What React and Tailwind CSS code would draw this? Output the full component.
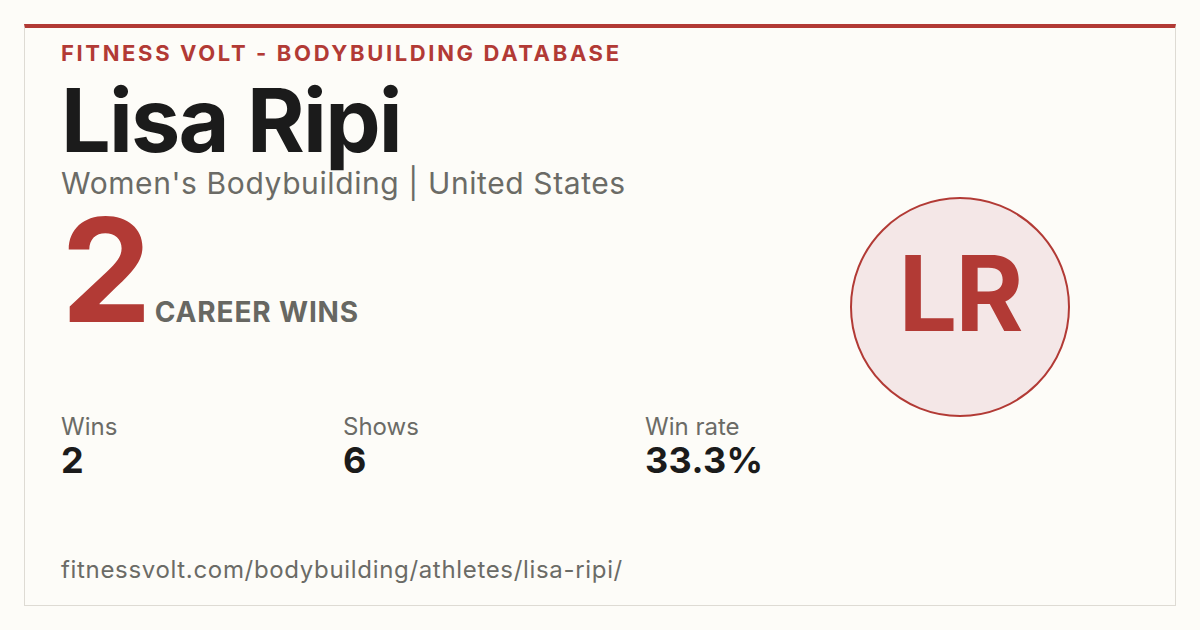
export default function App() {
  const font = { fontFamily: 'Inter, "Noto Sans", sans-serif' };
  return (
    <div className="w-[1200px] h-[630px] bg-[#fdfcf8] p-6" style={font}>
      <div className="h-full border border-[#dedbd4] border-t-4 border-t-[#b23a35] flex">
        <div className="flex-1 flex flex-col pl-9 pt-[14px] pb-[23px]">
          <div className="text-[22px] leading-none font-bold tracking-[0.12em] text-[#b23a35]">
            FITNESS VOLT - BODYBUILDING DATABASE
          </div>
          <div className="mt-3 text-[88px] leading-none font-bold tracking-[-0.02em] text-[#1b1b1b]">
            Lisa Ripi
          </div>
          <div className="mt-1 text-[30px] leading-none tracking-[0.02em] text-[#6b6b66]">
            Women's Bodybuilding | United States
          </div>
          <div className="flex items-baseline">
            <div className="text-[144px] leading-none font-bold text-[#b23a35] tracking-[-0.02em]">2</div>
            <div className="ml-1.5 text-[28px] leading-none font-bold tracking-[0.03em] text-[#676762]">CAREER WINS</div>
          </div>
          <div className="mt-[73px] grid grid-cols-[282px_302px_auto]">
            <div className="flex flex-col">
              <div className="text-[24px] leading-none text-[#6b6b66]">Wins</div>
              <div className="mt-[3px] text-[36px] leading-none font-bold text-[#1b1b1b]">2</div>
            </div>
            <div className="flex flex-col">
              <div className="text-[24px] leading-none text-[#6b6b66]">Shows</div>
              <div className="mt-[3px] text-[36px] leading-none font-bold text-[#1b1b1b]">6</div>
            </div>
            <div className="flex flex-col">
              <div className="text-[24px] leading-none text-[#6b6b66]">Win rate</div>
              <div className="mt-[3px] text-[36px] leading-none font-bold tracking-[0.01em] text-[#1b1b1b]">33.3%</div>
            </div>
          </div>
          <div className="mt-auto text-[24px] leading-none tracking-[0.028em] text-[#6b6b66]">
            fitnessvolt.com/bodybuilding/athletes/lisa-ripi/
          </div>
        </div>
        <div className="pr-[105px] pt-[169px]">
          <div className="w-[220px] h-[220px] rounded-full bg-[#f4e7e7] border-2 border-[#b23a35] flex items-center justify-center pb-[28px]">
            <span className="text-[104px] leading-none font-bold text-[#b23a35] tracking-[-0.02em]">LR</span>
          </div>
        </div>
      </div>
    </div>
  );
}
